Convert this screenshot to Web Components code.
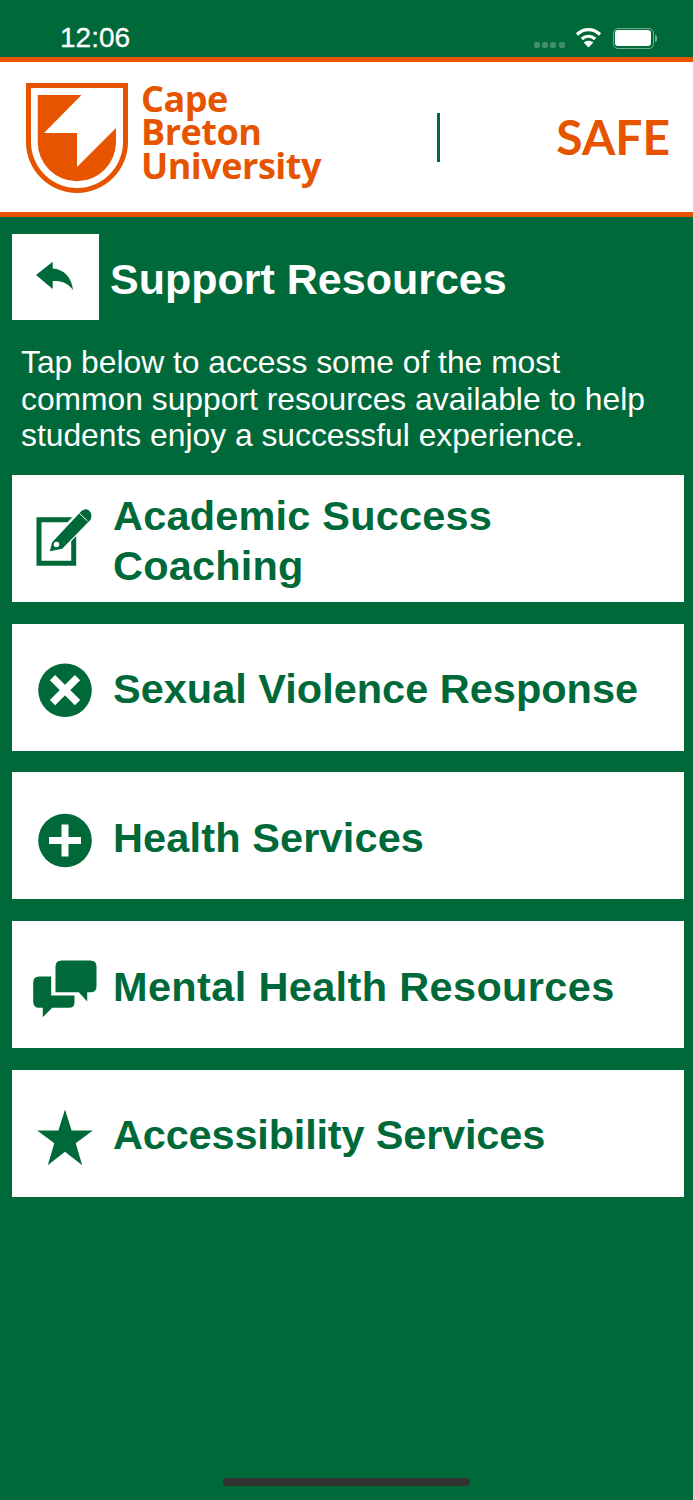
<!DOCTYPE html>
<html lang="en">
<head>
<meta charset="utf-8">
<title>Support Resources</title>
<style>
  html, body { margin: 0; padding: 0; }
  body {
    background: #00693a;
    font-family: "Liberation Sans", Arial, sans-serif;
    min-height: 1500px;
    display: flex;
    flex-direction: column;
  }
</style>
</head>
<body>
<status-bar time="12:06"></status-bar>
<brand-header></brand-header>
<page-title>Support Resources</page-title>
<intro-text>Tap below to access some of the most common support resources available to help students enjoy a successful experience.</intro-text>
<resource-list>
  <resource-row style="--track: .19px">
    <svg slot="icon" width="64" height="64" viewBox="0 0 64 64">
      <path fill="#00693a" fill-rule="evenodd" d="M3.5 10.2H43.2V58.8H3.5ZM8.5 15.2V53.8H38.2V15.2Z"/>
      <path fill="none" stroke="#fff" stroke-width="16" d="M23 38.5L53 7.5"/>
      <path fill="#00693a" fill-rule="evenodd" d="M16.800 44.200L19.200 35.200L48.200 4.200Q52 .8 55.500 3Q60 6.500 57.500 12.800L29.200 41.800ZM23.500 34.700A2.800 2.800 0 1 0 23.510 40.300A2.800 2.800 0 1 0 23.500 34.700Z"/>
      <path stroke="#fff" stroke-width="1" d="M46.500 6.500L54.500 14"/>
    </svg>
    Academic Success Coaching
  </resource-row>
  <resource-row>
    <svg slot="icon" width="64" height="64" viewBox="0 0 64 64">
      <circle cx="32" cy="35.200" r="26.800" fill="#00693a"/>
      <path stroke="#fff" stroke-width="7.500" d="M19.500 22.700L44.500 47.700M44.500 22.700L19.500 47.700"/>
    </svg>
    Sexual Violence Response
  </resource-row>
  <resource-row style="--track: .13px">
    <svg slot="icon" width="64" height="64" viewBox="0 0 64 64">
      <circle cx="32" cy="36.500" r="26.800" fill="#00693a"/>
      <path stroke="#fff" stroke-width="7" d="M32 20.500V52.500M16 36.500H48"/>
    </svg>
    Health Services
  </resource-row>
  <resource-row style="--track: .35px">
    <svg slot="icon" width="64" height="64" viewBox="0 0 64 64">
      <path fill="#00693a" d="M28.500 7.500H57.500Q63.500 7.500 63.500 13.500V33.200Q63.500 39.200 57.500 39.200H54.200V48.500L45.800 39.200H22.500V13.500Q22.500 7.500 28.500 7.500Z"/>
      <path fill="#00693a" d="M6.200 23.500H18.200V42.500H41.500V49.300Q41.500 54.800 36 54.800H19.200L9.800 64.200V54.800H6.200Q0.200 54.800 0.200 48.800V29.500Q0.200 23.500 6.200 23.500Z"/>
    </svg>
    Mental Health Resources
  </resource-row>
  <resource-row style="--track: -.18px">
    <svg slot="icon" width="64" height="64" viewBox="0 0 64 64">
      <path fill="#00693a" d="M32 8.500L38.600 29.500H59.800L42.700 42.300L49.200 64.200L32 50.800L14.800 64.200L21.300 42.300L4.200 29.500H25.400Z"/>
    </svg>
    Accessibility Services
  </resource-row>
</resource-list>
<home-indicator></home-indicator>

<script>
// little helper, every element just sets its own shadow html
class BaseEl extends HTMLElement {
  render(html) {
    this.attachShadow({ mode: 'open' });
    this.shadowRoot.innerHTML = html;
  }
}

class StatusBar extends BaseEl {
  connectedCallback() {
    this.render(`
      <style>
        :host { display: flex; align-items: flex-start; height: 57px; color: #fff; }
        .time { font-size: 28px; line-height: 32px; margin: 22px 0 0 60px; flex: 1; -webkit-text-stroke: .3px #fff; }
        .dots { display: flex; gap: 2.5px; margin-top: 42px; }
        .dots i { width: 5.8px; height: 6px; border-radius: 2px; background: rgba(255,255,255,.25); }
        svg { display: block; margin: 27px 0 0 10px; }
        .batt { margin: 27.5px 36px 0 11px; display: flex; align-items: center; }
        .shell { width: 36px; height: 16px; padding: 1.500px; border: 1px solid rgba(255,255,255,.45); border-radius: 5px; }
        .fill { width: 100%; height: 100%; background: #fff; border-radius: 3px; }
        .nub { width: 2px; height: 7px; margin-left: 1.500px; background: rgba(255,255,255,.45); border-radius: 0 2px 2px 0; }
      </style>
      <div class="time">${this.getAttribute('time')}</div>
      <div class="dots"><i></i><i></i><i></i><i></i></div>
      <svg width="27" height="21" viewBox="0 0 27 21" fill="none" stroke="#fff" stroke-width="3.400">
        <path d="M2 7.500C9 1 18 1 25 7.500"/>
        <path d="M6.800 12C10.800 8.500 16.200 8.500 20.200 12"/>
        <path fill="#fff" stroke="none" d="M13.500 20.500L8.700 15.500C11.500 13 15.500 13 18.300 15.500Z"/>
      </svg>
      <div class="batt"><div class="shell"><div class="fill"></div></div><div class="nub"></div></div>
    `);
  }
}

class BrandHeader extends BaseEl {
  connectedCallback() {
    this.render(`
      <style>
        :host {
          display: flex; align-items: center; height: 150px; background: #fff;
          border-top: 5px solid #e65400; border-bottom: 5px solid #e65400;
          padding: 0 23px 0 26px; color: #e65400;
        }
        svg { display: block; flex: none; margin-top: 2px; }
        .name {
          font-family: "Open Sans", sans-serif; font-weight: 700; font-size: 36px; line-height: 33.500px;
          letter-spacing: -.5px; margin: -10px 0 0 13px; width: 181px;
        }
        .rule { width: 3px; height: 49px; background: #00693a; margin-left: 115px; }
        .safe { font-family: Lato, sans-serif; font-weight: 700; font-size: 48px; margin: -2px 0 0 auto; }
      </style>
      <svg width="102" height="110" viewBox="26 83 102 110">
        <path fill="#e65400" fill-rule="evenodd" d="M26 83H128V142A51 51 0 0 1 26 142ZM31 88V142A46 46 0 0 0 123 142V88Z"/>
        <path fill="#e65400" d="M37.700 95H81.500L44 133H77V167L116 128V142A39.150 39.150 0 0 1 37.700 142Z"/>
      </svg>
      <div class="name">Cape<br>Breton<br>University</div>
      <div class="rule"></div>
      <div class="safe">SAFE</div>
    `);
  }
}

class PageTitle extends BaseEl {
  connectedCallback() {
    this.render(`
      <style>
        :host { display: flex; align-items: center; gap: 11px; margin: 17px 0 0 12px; color: #fff; }
        .back { width: 87px; height: 86px; background: #fff; display: flex; align-items: center; justify-content: center; }
        svg { display: block; }
        h1 { margin: 0; padding-top: 4px; font-size: 43px; line-height: 48px; font-weight: 700; }
      </style>
      <div class="back">
        <svg width="40" height="32" viewBox="35 261 40 32">
          <path fill="#00693a" d="M35 275L51.700 261.700V268.500C63 269 71 278 72 290C66 282 60 281 51.700 281V289Z"/>
        </svg>
      </div>
      <h1><slot></slot></h1>
    `);
  }
}

class IntroText extends BaseEl {
  connectedCallback() {
    this.render(`
      <style>
        :host { display: block; box-sizing: border-box; height: 155px; padding: 24px 30px 0 21px; color: #fff; font-size: 31.800px; line-height: 36.500px; }
      </style>
      <slot></slot>
    `);
  }
}

class ResourceList extends BaseEl {
  connectedCallback() {
    this.render(`
      <style>
        :host { display: grid; grid-auto-rows: 127px; row-gap: 21.700px; margin: 0 9px 0 12px; }
      </style>
      <slot></slot>
    `);
  }
}

class ResourceRow extends BaseEl {
  connectedCallback() {
    this.render(`
      <style>
        :host { display: flex; align-items: center; background: #fff; color: #00693a; cursor: pointer; }
        .icon { flex: none; width: 64px; height: 64px; margin: 0 16.500px 0 20.500px; }
        .label { font-size: 41.500px; line-height: 50px; font-weight: 700; padding: 4px 20px 0 0; letter-spacing: var(--track, 0); }
      </style>
      <div class="icon"><slot name="icon"></slot></div>
      <div class="label"><slot></slot></div>
    `);
  }
}

class HomeIndicator extends BaseEl {
  connectedCallback() {
    this.render(`
      <style>
        :host { display: block; width: 247px; height: 8px; margin: auto 0 14px 223px; background: #333; border-radius: 4px; }
      </style>
    `);
  }
}

customElements.define('status-bar', StatusBar);
customElements.define('brand-header', BrandHeader);
customElements.define('page-title', PageTitle);
customElements.define('intro-text', IntroText);
customElements.define('resource-list', ResourceList);
customElements.define('resource-row', ResourceRow);
customElements.define('home-indicator', HomeIndicator);
</script>
</body>
</html>
